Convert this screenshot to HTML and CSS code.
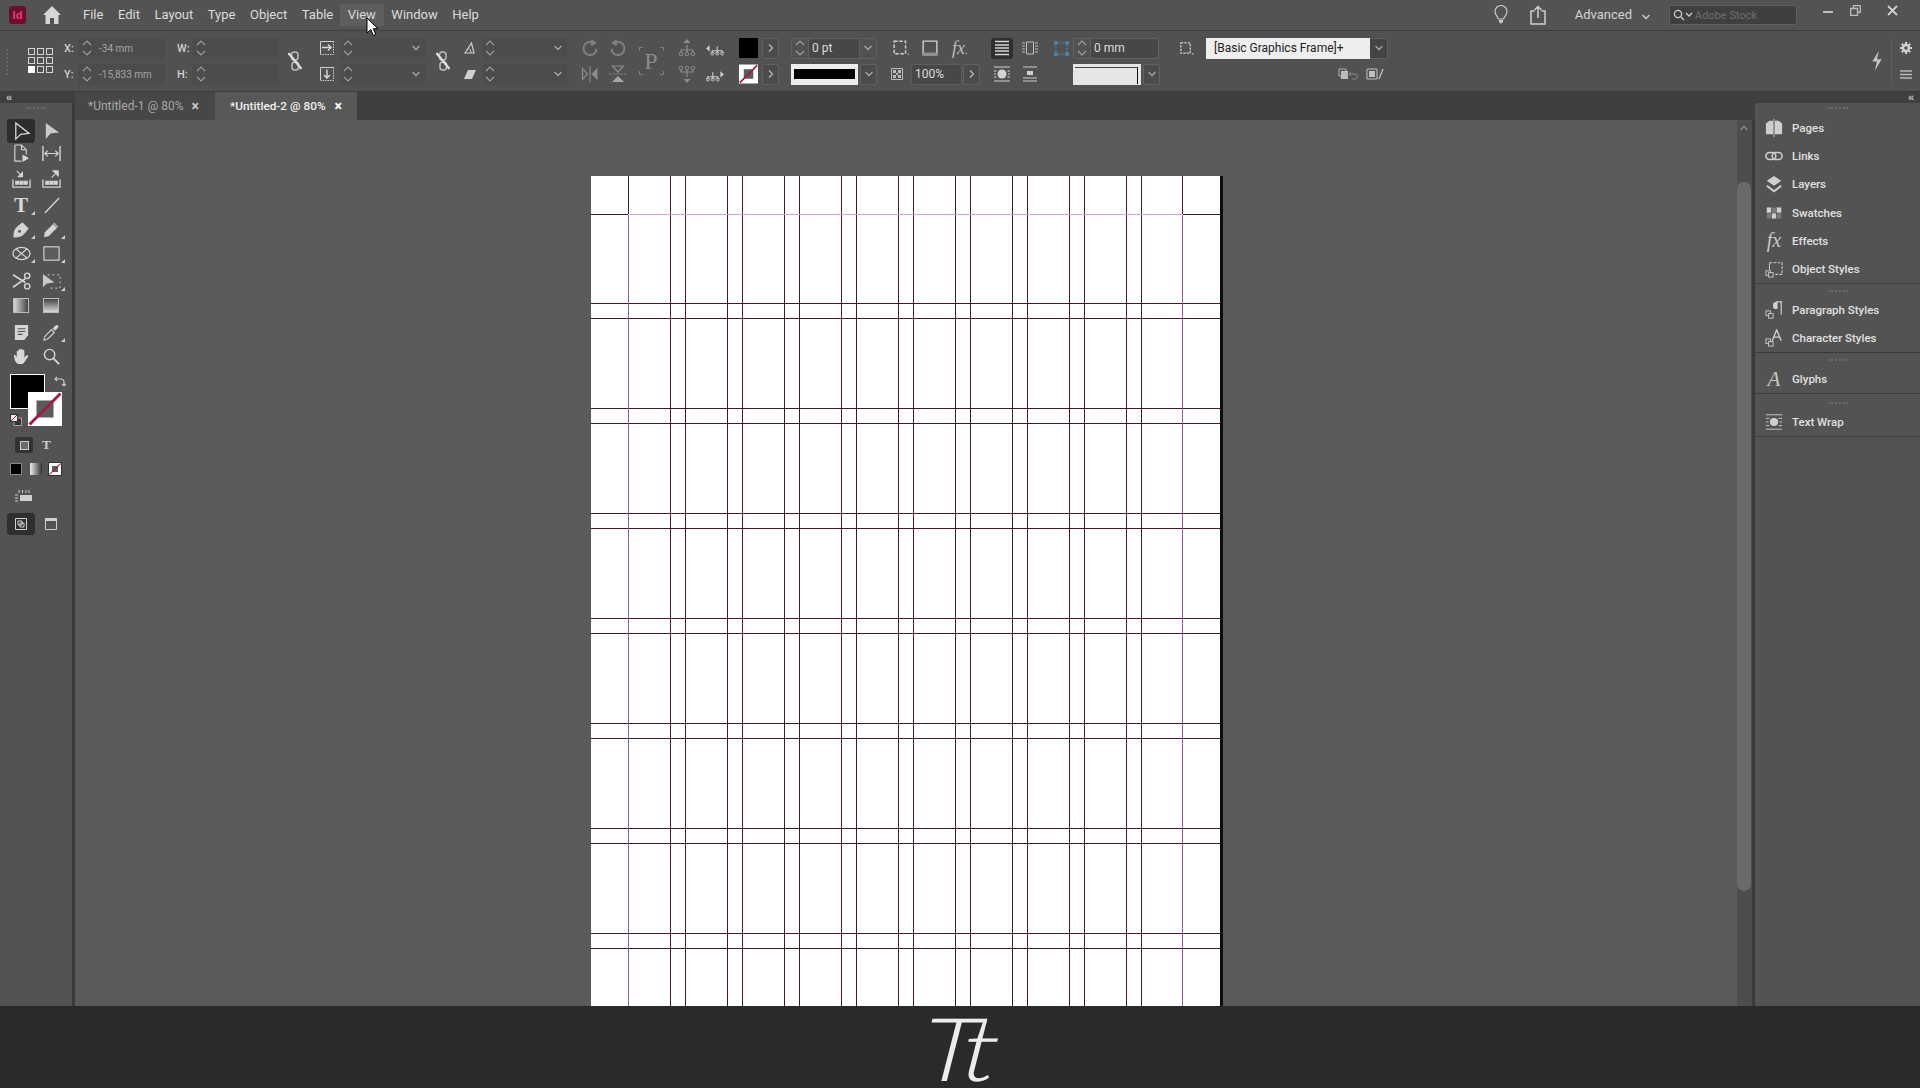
FILE: index.html
```html
<!DOCTYPE html>
<html lang="en">
<head>
<meta charset="utf-8">
<title>Adobe InDesign</title>
<link rel="stylesheet" href="styles.css">
</head>
<body>
<svg class="defs" width="0" height="0" aria-hidden="true">
  <symbol id="chev" viewBox="0 0 10 6"><path d="M1.5 1 5 4.5 8.500 1" fill="none" stroke="currentColor" stroke-width="1.300"/></symbol>
  <symbol id="chev-r" viewBox="0 0 6 10"><path d="M1 1.500 4.500 5 1 8.500" fill="none" stroke="currentColor" stroke-width="1.300"/></symbol>
  <symbol id="spin" viewBox="0 0 10 18"><path d="M1 6 5 2l4 4M1 12l4 4 4-4" fill="none" stroke="currentColor" stroke-width="1.100"/></symbol>
  <symbol id="link" viewBox="0 0 14 20"><rect x="3.500" y="1" width="6.500" height="8" rx="2.800" fill="none" stroke="currentColor" stroke-width="1.500"/><rect x="4" y="11" width="6.500" height="8" rx="2.800" fill="none" stroke="currentColor" stroke-width="1.500"/><path d="M.5 2 13.500 18" stroke="#dcdcdc" stroke-width="2.200"/></symbol>
  <symbol id="none-box" viewBox="0 0 34 34"><rect width="34" height="34" fill="#fff"/><rect x="8.500" y="8.500" width="17" height="17" fill="#5b5b5b"/><path d="M1.500 32.500 32.500 1.500" stroke="#a01c42" stroke-width="3"/></symbol>
</svg>
<div class="app">
  <header class="menubar">
    <div class="app-logo">Id</div>
    <svg class="home" viewBox="0 0 18 18"><path d="M9 0 0 9h2.500v9h4.500v-6h4v6h4.500V9H18z" fill="#d6d6d6"/></svg>
    <nav class="menu">
      <span>File</span><span>Edit</span><span>Layout</span><span>Type</span><span>Object</span><span>Table</span><span class="hover">View</span><span>Window</span><span>Help</span>
    </nav>
    <div class="menubar-right">
      <svg class="bulb" viewBox="0 0 14 20"><path d="M4.500 14C3.500 11 1 10 1 6.500a6 6 0 0 1 12 0C13 10 10.500 11 9.500 14z" fill="none" stroke="#c8c8c8" stroke-width="1.200"/><path d="M5 15h4v2.500H8L7 19l-1-1.500H5z" fill="#c8c8c8"/></svg>
      <svg class="share" viewBox="0 0 16 20"><path d="M4.500 6H1v13h14V6h-3.500M8 13V1.500M4.500 5 8 1.500 11.500 5" fill="none" stroke="#d0d0d0" stroke-width="1.500"/></svg>
      <span class="workspace-name">Advanced</span>
      <svg class="ws-chev"><use href="#chev"/></svg>
      <div class="stock"><svg class="stock-q" viewBox="0 0 20 12"><circle cx="5" cy="5" r="3.600" fill="none" stroke="#d0d0d0" stroke-width="1.300"/><path d="m8 8 3 3M13 4l3 3 3-3" fill="none" stroke="#d0d0d0" stroke-width="1.300"/></svg><span>Adobe Stock</span></div>
      <div class="winbtns">
        <svg viewBox="0 0 11 11"><path d="M0 7h10" stroke="#bdbdbd" stroke-width="2"/></svg>
        <svg viewBox="0 0 11 11"><path d="M3.500 3V.7h6.800v6.600H8M.7 3.500h6.800v6.800H.7z" fill="none" stroke="#bdbdbd" stroke-width="1.300"/></svg>
        <svg viewBox="0 0 11 11"><path d="m1 1 9 9M10 1l-9 9" stroke="#d0d0d0" stroke-width="1.800"/></svg>
      </div>
    </div>
  </header>

  <section class="control">
    <div class="grip-v"></div>
    <svg class="proxy" viewBox="0 0 25 25">
      <g fill="none" stroke="#d4d4d4" stroke-width="1">
        <rect x=".5" y=".5" width="6" height="6"/><rect x="9.500" y=".5" width="6" height="6"/><rect x="18.500" y=".5" width="6" height="6"/>
        <rect x=".5" y="9.500" width="6" height="6"/><rect x="9.500" y="9.500" width="6" height="6"/><rect x="18.500" y="9.500" width="6" height="6"/>
        <rect x="9.500" y="18.500" width="6" height="6"/><rect x="18.500" y="18.500" width="6" height="6"/>
      </g>
      <rect y="18" width="7" height="7" fill="#fff"/>
    </svg>

    <div class="grp">
      <div class="row"><label class="lbl">X:</label><div class="field"><svg class="spin"><use href="#spin"/></svg><span class="val dim">-34 mm</span></div></div>
      <div class="row"><label class="lbl">Y:</label><div class="field"><svg class="spin"><use href="#spin"/></svg><span class="val dim">-15,833 mm</span></div></div>
    </div>
    <div class="grp">
      <div class="row"><label class="lbl lbl-wh">W:</label><div class="field"><svg class="spin"><use href="#spin"/></svg></div></div>
      <div class="row"><label class="lbl lbl-wh">H:</label><div class="field"><svg class="spin"><use href="#spin"/></svg></div></div>
    </div>
    <div class="grp grp-center"><svg class="link-ic"><use href="#link"/></svg></div>
    <div class="grp">
      <div class="row"><svg class="ic14" viewBox="0 0 14 14"><path d="M.5 13.500V.5h13" fill="none" stroke="#cfcfcf"/><path d="M13.500.5v13H.5" fill="none" stroke="#cfcfcf" stroke-dasharray="1.500 1"/><path d="M2 6.500h9M8 3.500l3 3-3 3" fill="none" stroke="#d8d8d8" stroke-width="1.400"/></svg><div class="field field-sel"><svg class="spin"><use href="#spin"/></svg><svg class="chev"><use href="#chev"/></svg></div></div>
      <div class="row"><svg class="ic14" viewBox="0 0 14 14"><path d="M.5 13.500V.5h13" fill="none" stroke="#cfcfcf"/><path d="M13.500.5v13H.5" fill="none" stroke="#cfcfcf" stroke-dasharray="1.500 1"/><path d="M7 2.500v8.500M4 8l3 3 3-3" fill="none" stroke="#d8d8d8" stroke-width="1.400"/></svg><div class="field field-sel"><svg class="spin"><use href="#spin"/></svg><svg class="chev"><use href="#chev"/></svg></div></div>
    </div>
    <div class="grp grp-center"><svg class="link-ic"><use href="#link"/></svg></div>
    <div class="grp">
      <div class="row"><svg class="ic12" viewBox="0 0 12 12"><path d="M1 11 7.500 1 10 11z" fill="none" stroke="#cfcfcf" stroke-width="1.200"/><path d="M4 6.500c2 .5 3 2 3 4.500" fill="none" stroke="#cfcfcf"/></svg><div class="field field-sel"><svg class="spin"><use href="#spin"/></svg><svg class="chev"><use href="#chev"/></svg></div></div>
      <div class="row"><svg class="ic12" viewBox="0 0 12 12"><path d="M0 11 4 2h8L8 11z" fill="#cfcfcf"/></svg><div class="field field-sel"><svg class="spin"><use href="#spin"/></svg><svg class="chev"><use href="#chev"/></svg></div></div>
    </div>

    <div class="transforms">
      <svg class="ic18" viewBox="0 0 18 18"><path d="M15.500 9.500A6.500 6.500 0 1 1 11.500 3.500M10.500 1l3.500 3-4 2" fill="none" stroke="#7e7e7e" stroke-width="2"/></svg>
      <svg class="ic18" viewBox="0 0 18 18"><path d="M2.500 9.500A6.500 6.500 0 1 0 6.500 3.500M7.500 1 4 4l4 2" fill="none" stroke="#7e7e7e" stroke-width="2"/></svg>
      <div class="p-ic"><span>P</span></div>
      <svg class="ic18" viewBox="0 0 18 18"><path d="M3 14v-3h12v3M9 6v8" fill="none" stroke="#8c8c8c" stroke-width="1.200"/><circle cx="3" cy="15" r="1.800" fill="none" stroke="#8c8c8c"/><circle cx="9" cy="15" r="1.800" fill="none" stroke="#8c8c8c"/><circle cx="15" cy="15" r="1.800" fill="none" stroke="#8c8c8c"/><path d="M9 0l3.500 4h-7z" fill="#8c8c8c"/></svg>
      <svg class="ic18" viewBox="0 0 20 18"><path d="M7 15v-3h11v3M12.500 7v8" fill="none" stroke="#cccccc" stroke-width="1.200"/><circle cx="7" cy="15" r="1.800" fill="none" stroke="#cccccc"/><circle cx="12.500" cy="15" r="1.800" fill="none" stroke="#cccccc"/><circle cx="18" cy="15" r="1.800" fill="none" stroke="#cccccc"/><path d="M4 6v7L0 9.500z" fill="#cccccc"/></svg>
      <svg class="ic18" viewBox="0 0 18 18"><path d="M1.500 3.500v11l5-5.500z" fill="none" stroke="#8c8c8c" stroke-width="1.200"/><path d="M9 1v16" stroke="#8c8c8c"/><path d="M16.500 3v12l-6-6z" fill="#8c8c8c"/></svg>
      <svg class="ic18" viewBox="0 0 18 18"><path d="M3.500 1h11L9 7z" fill="none" stroke="#8c8c8c" stroke-width="1.200"/><path d="M0 9h18" stroke="#8c8c8c" stroke-dasharray="1.500 1"/><path d="M3 17h12L9 11z" fill="#a6a6a6"/></svg>
      <svg class="ic18" viewBox="0 0 18 18"><path d="M3 4v3h12V4M9 4v8" fill="none" stroke="#8c8c8c" stroke-width="1.200"/><circle cx="3" cy="3" r="1.800" fill="none" stroke="#8c8c8c"/><circle cx="9" cy="3" r="1.800" fill="none" stroke="#8c8c8c"/><circle cx="15" cy="3" r="1.800" fill="none" stroke="#8c8c8c"/><path d="M9 18l3.500-4h-7z" fill="#8c8c8c"/></svg>
      <svg class="ic18" viewBox="0 0 20 18"><path d="M2 15v-3h11v3M7.500 7v8" fill="none" stroke="#cccccc" stroke-width="1.200"/><circle cx="2" cy="15" r="1.800" fill="none" stroke="#cccccc"/><circle cx="7.500" cy="15" r="1.800" fill="none" stroke="#cccccc"/><circle cx="13" cy="15" r="1.800" fill="none" stroke="#cccccc"/><path d="M16 6v7l4-3.500z" fill="#cccccc"/></svg>
    </div>

    <div class="grp grp-swatch">
      <div class="row"><div class="sw sw-fill"></div><div class="btn-mini"><svg class="chev-r"><use href="#chev-r"/></svg></div></div>
      <div class="row"><svg class="sw"><use href="#none-box"/></svg><div class="btn-mini"><svg class="chev-r"><use href="#chev-r"/></svg></div></div>
    </div>
    <div class="grp grp-stroke">
      <div class="row"><div class="field field-box"><span class="spin-box"><svg class="spin"><use href="#spin"/></svg></span><span class="val">0 pt</span><span class="chev-box"><svg class="chev"><use href="#chev"/></svg></span></div></div>
      <div class="row"><div class="stroke-preview"><i></i></div><span class="chev-box chev-box-out"><svg class="chev"><use href="#chev"/></svg></span></div>
    </div>
    <div class="grp grp-fx">
      <div class="row row-fx">
        <svg class="ic16 ic-a" viewBox="0 0 14 14"><path d="M1 1h10v11H1z" fill="none" stroke="#cfcfcf" stroke-dasharray="3 1.500" stroke-width="1.300"/><path d="M13 12h1v1h-1z" fill="#cfcfcf"/></svg>
        <svg class="ic16 ic-b" viewBox="0 0 14 14"><path d="M1 1h12v12H1z" fill="none" stroke="#cfcfcf" stroke-width="1.200"/><path d="M1 11h12v3H1z" fill="#8f8f8f"/></svg>
        <span class="fx">fx<small>.</small></span>
      </div>
      <div class="row">
        <svg class="ic12 ic-op" viewBox="0 0 12 12"><path d="M.5.500h11v11H.5z" fill="none" stroke="#bbb"/><path d="M2 2h3v3H2zM7 2h3v3H7zM2 7h3v3H2zM7 7h3v3H7zM5 5h2v2H5z" fill="#bbb"/></svg>
        <div class="field field-op"><span class="val">100%</span></div>
        <div class="btn-mini"><svg class="chev-r"><use href="#chev-r"/></svg></div>
      </div>
    </div>
    <div class="grp grp-wrap">
      <div class="row"><div class="wrap-on"><svg class="ic16" viewBox="0 0 16 16"><path d="M1 1.500h14M1 14.500h14M1 5h14M1 8h14M1 11h14" stroke="#d8d8d8" stroke-width="1.300"/></svg></div><svg class="ic16 ic-w2" viewBox="0 0 16 16"><path d="M4.500 2h7v12h-7zM0 3h3M0 6h3M0 9h3M0 12h3M13 3h3M13 6h3M13 9h3M13 12h3" fill="none" stroke="#bdbdbd"/></svg></div>
      <div class="row"><svg class="ic16 ic-w3" viewBox="0 0 16 16"><circle cx="8" cy="8" r="4.500" fill="#d2d2d2"/><path d="M0 1h16M0 15h16M0 5h2.500M13.500 5H16M0 8h2M14 8h2M0 11h2.500M13.500 11H16" stroke="#d2d2d2"/></svg><svg class="ic16 ic-w4" viewBox="0 0 16 16"><path d="M1 1h14M1 15h14M1 12h14" stroke="#cfcfcf" stroke-width="1.200"/><path d="M5 5h6v4H5z" fill="#cfcfcf"/></svg></div>
    </div>
    <div class="grp grp-corner">
      <div class="row"><svg class="ic16 ic-corner" viewBox="0 0 16 16"><path d="M2 2h12v12H2z" fill="none" stroke="#4e7eaa" stroke-width="1.400" stroke-dasharray="2 1.500"/><path d="M0 0h4v4H0zM12 0h4v4h-4zM0 12h4v4H0zM12 12h4v4h-4z" fill="#4e7eaa"/></svg><div class="field field-box field-corner"><span class="spin-box"><svg class="spin"><use href="#spin"/></svg></span><span class="val">0 mm</span></div></div>
      <div class="row row-pad"><div class="stroke-style"></div><span class="chev-box chev-box-out"><svg class="chev"><use href="#chev"/></svg></span></div>
    </div>
    <div class="grp grp-style">
      <div class="row"><svg class="ic16 ic-frame" viewBox="0 0 16 16"><path d="M2 2h10v11H2z" fill="none" stroke="#cfcfcf" stroke-dasharray="2.500 1.200" stroke-width="1.400"/><path d="M14 13h1.500v1.500H14z" fill="#cfcfcf"/></svg><div class="style-select">[Basic Graphics Frame]+</div><span class="chev-box style-chev"><svg class="chev"><use href="#chev"/></svg></span></div>
      <div class="row row-end">
        <svg class="ic-s1" viewBox="0 0 20 12"><path d="M1 1h7v7H1z" fill="none" stroke="#b0b0b0"/><path d="M3 3h7v8H3z" fill="#bbb"/><path d="M12 6h5a2.500 2.500 0 0 1 0 5h-3M13 4l-2 2 2 2" fill="none" stroke="#8a8a8a"/></svg>
        <svg class="ic-s2" viewBox="0 0 18 12"><path d="M1 1h10v10H1z" fill="none" stroke="#c0c0c0"/><path d="M3 3h6v6H3z" fill="#c0c0c0"/><path d="m17 1-4 10" stroke="#c0c0c0" stroke-width="1.300"/></svg>
      </div>
    </div>
    <div class="control-end">
      <svg class="bolt" viewBox="0 0 10 17"><path d="M6.500 0 1 9h4l-2 8 6-10H5z" fill="#c4c4c4"/></svg>
      <div class="cols">
        <svg class="gear" viewBox="0 0 12 12"><circle cx="6" cy="6" r="3" fill="none" stroke="#d0d0d0" stroke-width="2.400"/><path d="M6 0v2M6 10v2M0 6h2M10 6h2M1.800 1.800l1.400 1.400M8.800 8.800l1.400 1.400M1.800 10.200l1.400-1.400M8.800 3.200l1.400-1.400" stroke="#d0d0d0" stroke-width="2"/></svg>
        <svg class="burger" viewBox="0 0 12 9"><path d="M0 1h12M0 4.500h12M0 8h12" stroke="#b8b8b8" stroke-width="1.300"/></svg>
      </div>
    </div>
  </section>

  <main class="workspace">
    <aside class="left-col">
      <div class="strip"><span class="collapse">&#171;</span></div>
      <div class="tools">
        <div class="grip"></div>
        <div class="tool-row">
          <div class="tool tool-on"><svg viewBox="0 0 20 20"><path d="M4 1v17l5-5 9-1z" fill="none" stroke="#ddd" stroke-width="1.300"/></svg></div>
          <div class="tool"><svg viewBox="0 0 20 20"><path d="M4 1v17l5-6 9-1z" fill="#c9c9c9"/></svg></div>
        </div>
        <div class="tool-row g2">
          <div class="tool"><svg viewBox="0 0 20 20"><path d="M3 1h7l5 5v5M10 1v5h5M3 1v17h7" fill="none" stroke="#d4d4d4" stroke-width="1.200"/><path d="M11 11l7 4-7 4z" fill="#d4d4d4"/></svg></div>
          <div class="tool"><svg viewBox="0 0 20 20"><path d="M1 2v16M19 2v16" stroke="#d4d4d4" stroke-width="1.500"/><path d="M3 10h14M6 7l-3 3 3 3M14 7l3 3-3 3" fill="none" stroke="#d4d4d4" stroke-width="1.300"/></svg></div>
        </div>
        <div class="tool-row g5">
          <div class="tool"><svg viewBox="0 0 20 20"><path d="M1 11v8h18v-8" fill="none" stroke="#d4d4d4" stroke-width="1.400"/><path d="M4 13h3v3H4zM8.500 13h3v3h-3zM13 13h3v3h-3zM5 2l6 6M11 3v5H6" fill="#d4d4d4" stroke="#d4d4d4" stroke-width="1.200"/></svg></div>
          <div class="tool"><svg viewBox="0 0 20 20"><path d="M1 11v8h18v-8" fill="none" stroke="#d4d4d4" stroke-width="1.400"/><path d="M4 13h3v3H4zM8.500 13h3v3h-3zM13 13h3v3h-3zM10 9l7-7M11 2h6v6" fill="#d4d4d4" stroke="#d4d4d4" stroke-width="1.200"/></svg></div>
        </div>
        <div class="tool-row g7">
          <div class="tool more"><span class="tool-t">T</span></div>
          <div class="tool"><svg viewBox="0 0 20 20"><path d="M3 18 18 2" stroke="#d4d4d4" stroke-width="1.500"/></svg></div>
        </div>
        <div class="tool-row g4">
          <div class="tool more"><svg viewBox="0 0 20 20"><path d="M2 18c0-5 1-9 4-11l5-4 6 6-4 5c-2 3-6 4-11 4zM2 18l6-6" fill="#d4d4d4" stroke="#d4d4d4"/><circle cx="8" cy="12" r="1.500" fill="#535353"/></svg></div>
          <div class="tool more"><svg viewBox="0 0 20 20"><path d="M2 18l1-5L13 3l4 4L7 17z" fill="#d4d4d4"/><path d="m12 4 4 4" stroke="#535353"/></svg></div>
        </div>
        <div class="tool-row g4">
          <div class="tool more"><svg viewBox="0 0 20 20"><ellipse cx="10" cy="10" rx="9" ry="6.500" fill="none" stroke="#d4d4d4" stroke-width="1.300"/><path d="m4 5 12 10M16 5 4 15" stroke="#d4d4d4" stroke-width="1.200"/></svg></div>
          <div class="tool more"><svg viewBox="0 0 20 20"><rect x="2" y="3" width="16" height="14" fill="#5c5c5c" stroke="#d4d4d4" stroke-width="1.200"/></svg></div>
        </div>
        <div class="tool-row g8">
          <div class="tool"><svg viewBox="0 0 20 20"><circle cx="16" cy="4" r="2.800" fill="none" stroke="#d4d4d4" stroke-width="1.500"/><circle cx="16" cy="15" r="2.800" fill="none" stroke="#d4d4d4" stroke-width="1.500"/><path d="M1 3l13 8M1 16l13-9" stroke="#d4d4d4" stroke-width="1.800"/></svg></div>
          <div class="tool more"><svg viewBox="0 0 20 20"><path d="M6 3h13v14H6" fill="none" stroke="#d4d4d4" stroke-dasharray="2 3"/><path d="M1 2v14l4-4 8-1z" fill="#c9c9c9"/></svg></div>
        </div>
        <div class="tool-row g4">
          <div class="tool"><div class="grad-a"></div></div>
          <div class="tool"><div class="grad-b"></div></div>
        </div>
        <div class="tool-row g7">
          <div class="tool"><svg viewBox="0 0 20 20"><path d="M3 2h14v11l-4 5H3z" fill="#d4d4d4"/><path d="M6 6h8M6 9h8M6 12h5" stroke="#535353" stroke-width="1.200"/></svg></div>
          <div class="tool more"><svg viewBox="0 0 20 20"><path d="M2 18c0-3 1-4 2-5l6-6 3 3-6 6c-1 1-2 2-5 2z" fill="none" stroke="#d4d4d4" stroke-width="1.200"/><path d="M11 6l3-3c2-2 4 0 3 2l-3 3z" fill="#d4d4d4"/></svg></div>
        </div>
        <div class="tool-row g4">
          <div class="tool"><svg viewBox="0 0 20 20"><path d="M5 11V5a1 1 0 0 1 2 0v4-6a1 1 0 0 1 2 0v6-6a1 1 0 0 1 2 0v6-5a1 1 0 0 1 2 0v7l2-2c1-1 3 0 2 1l-4 6c-1 2-3 2-5 2-3 0-4-2-5-4L2 9c0-1 1-1 2 0z" fill="#d8d8d8"/></svg></div>
          <div class="tool"><svg viewBox="0 0 20 20"><circle cx="8" cy="8" r="5.500" fill="none" stroke="#d4d4d4" stroke-width="1.500"/><path d="m12 12 6 6" stroke="#d4d4d4" stroke-width="2"/></svg></div>
        </div>
        <div class="colors">
          <div class="fill-box"></div>
          <svg class="stroke-box"><use href="#none-box"/></svg>
          <svg class="swap" viewBox="0 0 12 12"><path d="M1 3h6a3 3 0 0 1 3 3v4M3 1 1 3l2 2M8 8l2 2 2-2" fill="none" stroke="#c8c8c8" stroke-width="1.200"/></svg>
          <svg class="defaults" viewBox="0 0 12 12"><rect x="4" y="4" width="7.500" height="7.500" fill="#333" stroke="#bbb" stroke-width=".8"/><rect x=".5" y=".5" width="7" height="7" fill="#eee" stroke="#333"/><path d="M1 7l6-6" stroke="#a01c42"/></svg>
        </div>
        <div class="format-row">
          <div class="format-on"><i></i></div>
          <span class="format-t">T</span>
        </div>
        <div class="apply-row">
          <i class="apply apply-color"></i><i class="apply apply-grad"></i><span class="apply-none-wrap"><svg class="apply"><use href="#none-box"/></svg></span>
        </div>
        <div class="screen-ic"><svg viewBox="0 0 20 16"><path d="M5 2v3M8.500 2v3M12 2v3M15 2v3M1 7h3M1 10h3M1 13h3" stroke="#cfcfcf"/><rect x="6" y="7" width="12" height="6" fill="#cfcfcf"/></svg></div>
        <div class="mode-row">
          <div class="mode-on"><svg viewBox="0 0 12 12"><path d="M.5.500h11v11H.5z" fill="none" stroke="#d0d0d0"/><path d="M3 3h4v4H3zM5 5h4v4H5z" fill="none" stroke="#d0d0d0"/></svg></div>
          <svg class="mode-2" viewBox="0 0 12 12"><path d="M.5.500h11v11H.5z" fill="none" stroke="#d0d0d0"/><path d="M0 0h12v3H0z" fill="#d0d0d0"/></svg>
        </div>
      </div>
    </aside>
    <div class="center">
      <div class="tabs">
        <div class="tab"><span>*Untitled-1 @ 80%</span><b>&#215;</b></div>
        <div class="tab tab-on"><span>*Untitled-2 @ 80%</span><b>&#215;</b></div>
      </div>
      <div class="view">
        <div class="canvas">
          <div class="page">
            <svg class="guides" viewBox="0 0 630 830">
              <path class="g-dark" d="M79 0v830M94 0v830M136 0v830M151 0v830M193 0v830M208 0v830M250 0v830M265 0v830M307 0v830M322 0v830M364 0v830M379 0v830M421 0v830M436 0v830M478 0v830M493 0v830M535 0v830M550 0v830"/>
              <path class="g-dark" d="M0 127.500h630M0 142.500h630M0 232.500h630M0 247.500h630M0 337.500h630M0 352.500h630M0 442.500h630M0 457.500h630M0 547.500h630M0 562.500h630M0 652.500h630M0 667.500h630M0 757.500h630M0 772.500h630"/>
              <path class="g-dark" d="M37.500 0v38M591.500 0v38M0 38.500h37M592 38.500h38"/>
              <path class="g-purple" d="M37.500 39v791M591.500 39v791"/>
              <path class="g-pink" d="M38 38.500h553"/>
            </svg>
          </div>
        </div>
        <div class="scroll"><svg class="scroll-up"><use href="#chev"/></svg><div class="thumb"></div></div>
      </div>
    </div>
    <aside class="dock">
      <div class="strip strip-r"><span class="collapse">&#171;</span></div>
      <div class="dock-group dock-first">
        <div class="grip"></div>
        <div class="dock-row"><svg viewBox="0 0 20 20"><path d="M1 5l4-3h4v15H1zM19 5l-4-3h-4v15h8z" fill="#cfcfcf"/><path d="M10 0v20" stroke="#cfcfcf"/></svg><span>Pages</span></div>
        <div class="dock-row"><svg viewBox="0 0 20 20"><rect x="1" y="6" width="11" height="8" rx="4" fill="none" stroke="#cfcfcf" stroke-width="1.700"/><rect x="8" y="6" width="11" height="8" rx="4" fill="none" stroke="#cfcfcf" stroke-width="1.700"/></svg><span>Links</span></div>
        <div class="dock-row"><svg viewBox="0 0 20 20"><path d="M10 1l8 5.500-8 5.500-8-5.500z" fill="#cfcfcf"/><path d="M2 12l8 6 8-6" fill="none" stroke="#cfcfcf" stroke-width="2.200"/></svg><span>Layers</span></div>
        <div class="dock-row"><svg viewBox="0 0 20 20"><path d="M2 4h16v12H2z" fill="#7a7a7a"/><path d="M2 4h5v6H2zM12.500 4H18v6h-5.500zM7.500 10h5v6h-5z" fill="#d2d2d2"/><path d="M2 10h16M7.200 4v12M12.700 4v12" stroke="#535353" stroke-width=".8"/></svg><span>Swatches</span></div>
        <div class="dock-row"><span class="dock-fx">fx</span><span>Effects</span></div>
        <div class="dock-row"><svg viewBox="0 0 20 20"><path d="M5 3h14v13H11" fill="none" stroke="#cfcfcf" stroke-dasharray="3 1.500" stroke-width="1.200"/><path d="M5 3v8" stroke="#cfcfcf"/><rect x="1" y="12" width="5" height="5" fill="#535353" stroke="#cfcfcf"/><rect x="4" y="14" width="5" height="5" fill="#535353" stroke="#cfcfcf"/></svg><span>Object Styles</span></div>
      </div>
      <div class="dock-group dock-second">
        <div class="grip"></div>
        <div class="dock-row"><svg viewBox="0 0 20 20"><path d="M12 1h7M18 1v14" stroke="#cfcfcf" stroke-width="1.300"/><path d="M9 4a3 3 0 0 1 3-3h2v8h-2a3 3 0 0 1-3-3z" fill="#cfcfcf"/><rect x="1" y="11" width="5" height="5" fill="#535353" stroke="#cfcfcf"/><rect x="4" y="14" width="5" height="5" fill="#535353" stroke="#cfcfcf"/></svg><span>Paragraph Styles</span></div>
        <div class="dock-row"><svg viewBox="0 0 20 20"><path d="M8 13 13 1l5 12M10 9h6" fill="none" stroke="#cfcfcf" stroke-width="1.500"/><rect x="1" y="11" width="5" height="5" fill="#535353" stroke="#cfcfcf"/><rect x="4" y="14" width="5" height="5" fill="#535353" stroke="#cfcfcf"/></svg><span>Character Styles</span></div>
      </div>
      <div class="dock-group dock-third">
        <div class="grip"></div>
        <div class="dock-row"><span class="dock-glyph">A</span><span>Glyphs</span></div>
      </div>
      <div class="dock-group dock-fourth">
        <div class="grip"></div>
        <div class="dock-row"><svg viewBox="0 0 20 20"><circle cx="10" cy="10" r="4.500" fill="#cfcfcf"/><path d="M1 2h18M1 18h18M1 6h4M15 6h4M1 10h3M16 10h3M1 14h4M15 14h4" stroke="#cfcfcf"/></svg><span>Text Wrap</span></div>
      </div>
    </aside>
  </main>

  <footer class="caption"><span>Tt</span></footer>

  <svg class="cursor" viewBox="0 0 13 20"><path d="M1 1v15l3.800-3.500 2.500 6 2.500-1-2.500-5.800H12z" fill="#fff" stroke="#000"/></svg>
</div>
</body>
</html>
```
FILE: styles.css
```css
* { box-sizing: border-box; }
html, body { margin: 0; padding: 0; background: #535353; }
body { font-family: Roboto, "Liberation Sans", sans-serif; color: #d6d6d6; }
.defs { position: absolute; }
svg { display: block; flex: none; }

.app { position: relative; width: 1920px; height: 1088px; display: flex; flex-direction: column; overflow: hidden; background: #535353; }

/* menu bar */
.menubar { height: 31px; flex: none; display: flex; align-items: center; background: #535353; border-bottom: 1px solid #3d3d3d; padding-left: 9px; }
.app-logo { width: 17px; height: 18px; border-radius: 3px; background: #6b0f30; color: #e0406f; font: 700 11px/18px "Liberation Sans", sans-serif; text-align: center; }
.home { width: 18px; height: 18px; margin-left: 17px; }
.menu { display: flex; margin-left: 22px; font-size: 13px; color: #dcdcdc; height: 22px; align-items: center; }
.menu span { margin-right: 14.500px; line-height: 22px; }
.menu .hover { background: #5e5e5e; margin: 0 7.500px 0 -8px; padding: 0 8px; }
.menubar-right { margin-left: auto; display: flex; align-items: center; height: 100%; }
.bulb { width: 14px; height: 20px; }
.share { width: 16px; height: 20px; margin-left: 22px; }
.workspace-name { margin-left: 29px; font-size: 13px; color: #d4d4d4; position: relative; top: -1px; }
.ws-chev { width: 10px; height: 6px; margin: 3px 0 0 9px; color: #cfcfcf; }
.stock { width: 128px; height: 20px; margin-left: 18px; background: #3f3f3f; border: 1px solid #5f5f5f; border-radius: 2px; display: flex; align-items: center; padding-left: 3px; font-size: 11px; color: #6e6e6e; }
.stock-q { width: 20px; height: 12px; margin-right: 2px; }
.winbtns { display: flex; margin-left: 26px; width: 97px; height: 100%; align-items: flex-start; padding-top: 5px; }
.winbtns svg { width: 11px; height: 11px; }
.winbtns svg:nth-child(2) { margin-left: 16px; }
.winbtns svg:nth-child(3) { margin-left: 26px; }

/* control panel */
.control { height: 61px; flex: none; display: grid; grid-template-columns: 28px 34px 113px 109px 34px 114px 28px 118px 157px 52px 98px 100px 65px 125px 220px 1fr; background: #515151; border-bottom: 1px solid #3c3c3c; padding-top: 6.500px; }
.grip-v { width: 2px; height: 26px; margin: 11px 0 0 6px; border-left: 2px dotted #666; }
.proxy { width: 25px; height: 25px; margin-top: 10px; }
.grp { display: flex; flex-direction: column; gap: 5px; }
.grp-center { align-items: flex-start; justify-content: center; height: 47px; }
.row { height: 21px; display: flex; align-items: center; }
.lbl { width: 16px; padding-left: 2px; font-size: 11px; font-weight: 500; color: #d0d0d0; }
.lbl-wh { width: 17px; }
.field { width: 87px; height: 21px; display: flex; align-items: center; background: #4c4c4c; border-radius: 2px; color: #dcdcdc; font-size: 11px; }
.spin { width: 10px; height: 18px; margin-left: 4px; color: #a0a0a0; }
.field-sel .spin { margin-left: 2px; }
.val { margin-left: 7px; }
.dim { color: #a4a4a4; font-size: 10px; }
.link-ic { width: 14px; height: 20px; margin-left: 4px; color: #bdbdbd; }
.grp .ic14 { width: 14px; height: 14px; margin-left: 2px; }
.grp .ic12 { width: 12px; height: 12px; margin-left: 4px; }
.field-sel { width: 84px; margin-left: 7px; position: relative; }
.field-sel .chev { margin-left: auto; margin-right: 4px; }
.chev { width: 10px; height: 6px; color: #a8a8a8; }
.transforms { display: grid; grid-template-columns: 24px 32px 34px 38px 18px; grid-template-rows: 21px 21px; row-gap: 5px; justify-items: center; align-items: center; }
.transforms .p-ic { grid-column: 3; grid-row: 1 / span 2; }
.ic18 { width: 18px; height: 18px; }
.p-ic { width: 25px; height: 28px; display: flex; align-items: center; justify-content: center; color: #8a8a8a; font: 24px/1 "Liberation Serif", serif; background:
  linear-gradient(#7c7c7c, #7c7c7c) 0 0 / 4px 1px no-repeat, linear-gradient(#7c7c7c, #7c7c7c) 0 0 / 1px 4px no-repeat,
  linear-gradient(#7c7c7c, #7c7c7c) 100% 0 / 4px 1px no-repeat, linear-gradient(#7c7c7c, #7c7c7c) 100% 0 / 1px 4px no-repeat,
  linear-gradient(#7c7c7c, #7c7c7c) 0 100% / 4px 1px no-repeat, linear-gradient(#7c7c7c, #7c7c7c) 0 100% / 1px 4px no-repeat,
  linear-gradient(#7c7c7c, #7c7c7c) 100% 100% / 4px 1px no-repeat, linear-gradient(#7c7c7c, #7c7c7c) 100% 100% / 1px 4px no-repeat; }
.grp-swatch { padding-left: 4px; }
.sw { width: 19px; height: 20px; }
.sw-fill { background: #000; }
.btn-mini { width: 17px; height: 21px; margin-left: 4px; border: 1px solid #616161; border-radius: 2px; background: #4b4b4b; display: flex; align-items: center; justify-content: center; }
.chev-r { width: 6px; height: 10px; color: #b8b8b8; }
.grp-stroke { padding-left: 4px; }
.field-box { width: 86px; border: 1px solid #616161; background: #474747; position: relative; }
.spin-box { width: 17px; height: 100%; background: #515151; border-right: 1px solid #616161; display: flex; align-items: center; }
.spin-box .spin { margin-left: 3px; }
.field-box .val { margin-left: 3px; font-size: 12px; }
.chev-box { width: 17px; height: 100%; margin-left: auto; background: #515151; border-left: 1px solid #616161; display: flex; align-items: center; justify-content: center; }
.chev-box-out { height: 21px; margin-left: 2px; border: 1px solid #616161; background: #4b4b4b; border-radius: 2px; }
.stroke-preview { width: 67px; height: 21px; background: #ececec; padding: 5px 3px; }
.stroke-preview i { display: block; height: 10px; background: #000; }
.grp-fx { padding-left: 6px; }
.ic16 { width: 16px; height: 16px; }
.row-fx .ic-a { margin-left: 2px; }
.row-fx .ic-b { margin-left: 13px; }
.fx { margin-left: 14px; font: italic 18px/1 "Liberation Serif", serif; color: #bcbcbc; }
.fx small { font-size: 12px; }
.grp-fx .ic-op { margin: 0 8px 0 0; }
.field-op { width: 51px; border: 1px solid #5c5c5c; background: #474747; }
.field-op .val { margin-left: 3px; font-size: 12px; }
.grp-fx .btn-mini { margin-left: 1px; }
.grp-wrap { padding-left: 6px; }
.wrap-on { width: 22px; height: 21px; background: #2f2f2f; border-radius: 3px; display: flex; align-items: center; justify-content: center; }
.grp-wrap .ic-w2 { margin-left: 9px; }
.grp-wrap .ic-w3 { margin-left: 3px; }
.grp-wrap .ic-w4 { margin-left: 12px; }
.grp-corner { padding-left: 4px; }
.ic-corner { width: 15px; height: 15px; }
.field-corner { margin-left: 4px; }
.row-pad { padding-left: 19px; }
.stroke-style { width: 68px; height: 21px; background: #e6e6e6; border-top: 3px solid #e6e6e6; position: relative; }
.stroke-style::before { content: ""; position: absolute; left: 2px; right: 3px; top: 0; height: 16px; border-top: 1px solid #444; border-right: 1px solid #111; }
.grp-style { padding-left: 4px; }
.ic-frame { width: 15px; height: 15px; }
.style-select { width: 164px; height: 21px; margin-left: 12px; background: #eeeeee; color: #222; font-size: 12px; line-height: 21px; padding-left: 8px; }
.style-chev { width: 18px; height: 21px; margin-left: 0; background: #444; border: 1px solid #5f5f5f; border-left: 0; border-radius: 0 3px 3px 0; }
.row-end { justify-content: flex-end; padding-right: 11px; }
.ic-s1 { width: 20px; height: 12px; }
.ic-s2 { width: 18px; height: 12px; margin-left: 8px; }
.control-end { display: flex; align-items: flex-start; justify-content: flex-end; height: 50px; }
.bolt { width: 12px; height: 20px; margin: 13px 8px 0 0; }
.cols { width: 29px; height: 48px; border-left: 1px solid #5e5e5e; display: flex; flex-direction: column; align-items: center; gap: 14px; padding-top: 4px; }
.gear { width: 12px; height: 12px; }
.burger { width: 12px; height: 9px; margin-top: 2px; }

/* workspace */
.workspace { flex: 1; min-height: 0; display: flex; }
.left-col { width: 75px; flex: none; display: flex; flex-direction: column; background: #3a3a3a; }
.strip { height: 11px; flex: none; background: #3f3f3f; position: relative; }
.collapse { position: absolute; top: -2px; left: 6px; font: 700 11px/14px "Liberation Sans", sans-serif; color: #c0c0c0; }
.strip-r .collapse { left: auto; right: 6px; }
.grip { width: 20px; height: 3px; margin: 0 auto; border-top: 2px dotted #6a6a6a; }
.tools { width: 72px; flex: 1; background: #535353; padding-top: 4px; display: flex; flex-direction: column; }
.tools .grip { margin-bottom: 11px; }
.tool-row { display: flex; padding-left: 7px; height: 20px; align-items: center; }
.g2 { margin-top: 2px; } .g4 { margin-top: 4px; } .g5 { margin-top: 5px; } .g7 { margin-top: 7px; } .g8 { margin-top: 8px; }
.tool { width: 28px; height: 20px; display: flex; align-items: center; justify-content: center; position: relative; }
.tool + .tool { margin-left: 2px; }
.tool svg { width: 19px; height: 19px; }
.tool-on { background: #2d2d2d; height: 24px; border-radius: 3px; }
.more::after { content: ""; position: absolute; right: 0; bottom: 0; border: 2px solid transparent; border-right-color: #cfcfcf; border-bottom-color: #cfcfcf; }
.tool-t { font: 700 21px/20px "Liberation Serif", serif; color: #d8d8d8; }
.grad-a, .grad-b { width: 16px; height: 15px; border: 1px solid #bbb; }
.grad-a { background: linear-gradient(90deg, #d8d8d8, #454545); }
.grad-b { background: linear-gradient(180deg, #444, #d8d8d8); }
.colors { position: relative; height: 55px; margin-top: 7px; }
.fill-box { position: absolute; left: 10px; top: 1px; width: 35px; height: 35px; background: #000; border: 1px solid #fff; }
.stroke-box { position: absolute; left: 28px; top: 19px; width: 34px; height: 34px; }
.swap { position: absolute; left: 54px; top: 3px; width: 12px; height: 12px; }
.defaults { position: absolute; left: 10px; top: 41px; width: 12px; height: 12px; }
.format-row { display: flex; align-items: center; height: 16px; margin-top: 9px; padding-left: 15px; }
.format-on { width: 18px; height: 16px; background: #333; border-radius: 2px; display: flex; align-items: center; justify-content: center; }
.format-on i { width: 9px; height: 9px; border: 1px solid #ccc; background: #6a6a6a; }
.format-t { margin-left: 9px; font: 700 13px/16px "Liberation Serif", serif; color: #cfcfcf; }
.apply-row { display: flex; align-items: center; margin-top: 9px; padding-left: 10px; height: 14px; }
.apply { display: block; width: 12px; height: 12px; }
.apply-color { background: #000; border: 1px solid #888; }
.apply-grad { margin-left: 8px; background: linear-gradient(90deg, #eee, #333); }
.apply-none-wrap { margin-left: 6px; padding: 1px; background: #333; }
.screen-ic { height: 16px; margin-top: 12px; padding-left: 14px; }
.screen-ic svg { width: 20px; height: 16px; }
.mode-row { display: flex; align-items: center; margin-top: 9px; padding-left: 7px; }
.mode-on { width: 28px; height: 22px; background: #2f2f2f; border-radius: 3px; display: flex; align-items: center; justify-content: center; }
.mode-on svg, .mode-2 { width: 12px; height: 12px; }
.mode-2 { margin-left: 10px; }

.center { flex: 1; min-width: 0; display: flex; flex-direction: column; }
.tabs { height: 28px; flex: none; display: flex; background: #3f3f3f; }
.tab { width: 140px; padding-left: 13px; display: flex; align-items: center; font-size: 12px; color: #a8a8a8; background: #474747; }
.tab b { margin-left: 8px; font-size: 14px; color: #c8c8c8; }
.tab-on { width: 142px; padding-left: 15px; background: #585858; color: #f0f0f0; font-weight: 500; font-size: 11.800px; }
.tab-on b { color: #fff; margin-left: 9px; }
.view { flex: 1; min-height: 0; display: flex; }
.canvas { flex: 1; min-width: 0; background: #5a5a5a; padding: 56px 0 0 516px; overflow: hidden; }
.page { width: 632px; height: 830px; background: #fff; border-right: 3px solid #0c0c0c; }
.guides { width: 630px; height: 830px; shape-rendering: crispEdges; }
.guides path { fill: none; stroke-width: 1; }
.g-dark { stroke: #46162f; }
.g-purple { stroke: #8a5a9a; }
.g-pink { stroke: #d9a0d0; }
.scroll { width: 18px; flex: none; background: #4d4d4d; padding: 0 3px 0 0; position: relative; border-right: 3px solid #3a3a3a; }
.scroll-up { width: 10px; height: 6px; position: absolute; top: 5px; left: 2px; color: #8a8a8a; transform: scaleY(-1); }
.thumb { width: 14px; height: 709px; margin: 62px 0 0 0; background: #6a6a6a; border-radius: 7px; }

.dock { width: 165px; flex: none; background: #535353; display: flex; flex-direction: column; }
.dock-group { padding-top: 4px; border-bottom: 1px solid #3a3a3a; }
.dock-group .grip { margin-bottom: 3px; }
.dock-first .grip { margin-bottom: 4px; }
.dock-second { padding-top: 5.500px; }
.dock-third { padding-top: 6px; }
.dock-fourth { padding-top: 7.500px; }
.dock-row { height: 28.200px; display: flex; align-items: center; padding-left: 10px; font-size: 11.500px; font-weight: 500; color: #e0e0e0; }
.dock-row svg { width: 18px; height: 18px; margin-right: 9px; }
.dock-fx, .dock-glyph { width: 18px; margin-right: 9px; text-align: center; color: #c8c8c8; font-family: "Liberation Serif", serif; font-style: italic; font-weight: 400; }
.dock-fx { font-size: 20px; }
.dock-glyph { font-size: 21px; }

/* caption */
.caption { height: 82px; flex: none; background: #2a2a2a; display: flex; align-items: center; justify-content: center; position: relative; z-index: 1; padding-right: 10px; padding-bottom: 1px; }
.caption span { display: inline-block; font: italic 300 88px/60px Lato, sans-serif; color: #ececec; letter-spacing: -10px; transform: skewX(-6deg) scaleX(1.230); }

/* pointer */
.cursor { position: absolute; left: 366px; top: 17px; width: 13px; height: 20px; z-index: 2; }
```
